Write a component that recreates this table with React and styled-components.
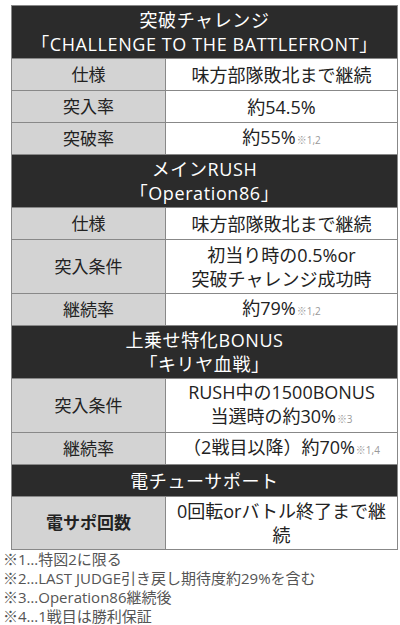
import React from "react";
import styled, { createGlobalStyle } from "styled-components";

const GlobalStyle = createGlobalStyle`
  body {
    margin: 0;
    background: #fff;
    font-family: "Open Sans", "Noto Sans CJK JP", sans-serif;
  }
`;

const Page = styled.div`
  width: 400px;
  padding-top: 5px;
`;

const Table = styled.table`
  margin-left: 11px;
  width: 387px;
  border-collapse: collapse;
  table-layout: fixed;
  border: 1px solid #888;
`;

const LabelCol = styled.col`
  width: 154px;
`;

const HeadCell = styled.th`
  background: #2b2b2b;
  color: #fff;
  font-weight: normal;
  font-size: 18px;
  letter-spacing: 0.6px;
  line-height: 24px;
  height: ${props => props.h || 52}px;
  padding: 0;
  border: 1px solid #888;
  text-align: center;
  white-space: nowrap;
`;

const Label = styled.td`
  background: #d3d3d3;
  color: #222;
  font-size: 17px;
  font-weight: ${props => (props.bold ? 700 : 400)};
  line-height: 22px;
  text-align: center;
  padding: 0;
  height: ${props => props.h || 31}px;
  border: 1px solid #888;
`;

const Value = styled.td`
  background: #fff;
  color: #222;
  font-size: 18px;
  line-height: 24px;
  text-align: center;
  padding: 0;
  border: 1px solid #888;
  white-space: nowrap;
`;

const Note = styled.span`
  font-size: 10px;
  color: #999;
  margin-left: 1px;
`;

const Footnotes = styled.div`
  padding: 0 0 0 3px;
  color: #555;
  font-size: 15px;
  line-height: 19px;
  white-space: nowrap;
`;

const sections = [
  {
    title: ["突破チャレンジ", "「CHALLENGE TO THE BATTLEFRONT」"],
    rows: [
      { label: "仕様", value: ["味方部隊敗北まで継続"] },
      { label: "突入率", value: ["約54.5%"] },
      { label: "突破率", value: ["約55%"], note: "※1,2" },
    ],
  },
  {
    title: ["メインRUSH", "「Operation86」"],
    rows: [
      { label: "仕様", value: ["味方部隊敗北まで継続"] },
      { label: "突入条件", value: ["初当り時の0.5%or", "突破チャレンジ成功時"], h: 53 },
      { label: "継続率", value: ["約79%"], note: "※1,2" },
    ],
  },
  {
    title: ["上乗せ特化BONUS", "「キリヤ血戦」"],
    rows: [
      { label: "突入条件", value: ["RUSH中の1500BONUS", "当選時の約30%"], note: "※3", h: 53 },
      { label: "継続率", value: ["（2戦目以降）約70%"], note: "※1,4" },
    ],
  },
  {
    title: ["電チューサポート"],
    h: 31,
    rows: [
      { label: "電サポ回数", value: ["0回転orバトル終了まで継", "続"], h: 52, bold: true },
    ],
  },
];

const notes = [
  "※1…特図2に限る",
  "※2…LAST JUDGE引き戻し期待度約29%を含む",
  "※3…Operation86継続後",
  "※4…1戦目は勝利保証",
];

export default function App() {
  return (
    <Page>
      <GlobalStyle />
      <Table>
        <colgroup>
          <LabelCol />
          <col />
        </colgroup>
        <tbody>
          {sections.map((s, i) => (
            <React.Fragment key={i}>
              <tr>
                <HeadCell colSpan={2} h={s.h}>
                  {s.title.map((t, j) => (
                    <div key={j}>{t}</div>
                  ))}
                </HeadCell>
              </tr>
              {s.rows.map((r, j) => (
                <tr key={j}>
                  <Label h={r.h} bold={r.bold}>{r.label}</Label>
                  <Value>
                    {r.value.map((v, k) => (
                      <div key={k}>
                        {v}
                        {r.note && k === r.value.length - 1 && <Note>{r.note}</Note>}
                      </div>
                    ))}
                  </Value>
                </tr>
              ))}
            </React.Fragment>
          ))}
        </tbody>
      </Table>
      <Footnotes>
        {notes.map((n, i) => (
          <div key={i}>{n}</div>
        ))}
      </Footnotes>
    </Page>
  );
}
